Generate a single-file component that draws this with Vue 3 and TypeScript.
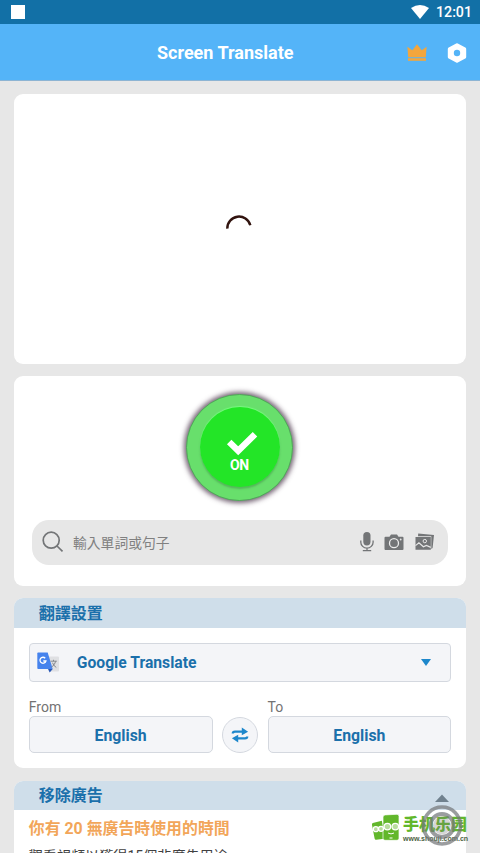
<script setup lang="ts">
import { ref } from 'vue'

const from = ref('English')
const to = ref('English')
const enabled = ref(true)

function swap(): void {
  const previous = from.value
  from.value = to.value
  to.value = previous
}
</script>

<template>
  <main class="screen">
    <div class="status">
      <span class="notice"></span>
      <div class="status-right">
        <svg width="18" height="14" viewBox="0 0 18 14"><path d="M0 3Q9-3 18 3L9 14Z" fill="#fff" /></svg>
        <span class="clock">12:01</span>
      </div>
    </div>
    <header class="bar">
      <h1>Screen Translate</h1>
      <div class="bar-icons">
        <svg width="20" height="18" viewBox="0 0 20 18" fill="#f3a63c">
          <path d="M.4 2.8 5.3 6.3 10 .2 14.7 6.3l4.9-3.5-.8 10.4H1.2Z" />
          <path d="M1 14.2h18v2.6H1Z" />
        </svg>
        <svg width="20" height="20" viewBox="0 0 20 20">
          <path d="M10 2 17.5 6v8L10 18 2.5 14V6Z" fill="#fff" stroke="#fff" stroke-width="3.4" stroke-linejoin="round" />
          <circle cx="10" cy="10" r="3.2" fill="#54b4f8" />
        </svg>
      </div>
    </header>

    <section class="card loading">
      <svg width="28" height="28" viewBox="0 0 28 28"><path d="M2.3 14.6A11.7 11.7 0 0 1 25.3 11.3" fill="none" stroke="#32140f" stroke-width="2.5" /></svg>
    </section>

    <section class="card control">
      <button class="power" @click="enabled = !enabled">
        <span class="power-core">
          <svg width="32" height="26" viewBox="0 0 32 26"><path d="m3.2 12 9 8.7L29 4.2" fill="none" stroke="#fff" stroke-width="6.4" /></svg>
          <span class="power-label">{{ enabled ? 'ON' : 'OFF' }}</span>
        </span>
      </button>
      <div class="search">
        <svg class="lens" width="22" height="22" viewBox="0 0 22 22" fill="none" stroke="#737577" stroke-width="1.7"><circle cx="9.2" cy="9.2" r="8" /><path d="m15 15 5.5 5.3" /></svg>
        <span class="hint">輸入單詞或句子</span>
        <svg class="mic" width="14" height="20" viewBox="0 0 14 20">
          <rect x="3.3" y="0" width="7.2" height="13.4" rx="3.6" fill="#737577" />
          <path d="M.8 8.6v1.6a6.1 5.9 0 0 0 12.3 0V8.6M7 16.2v2.3M2.8 18.7h8.4" fill="none" stroke="#737577" stroke-width="1.3" />
        </svg>
        <svg class="camera" width="20" height="17" viewBox="0 0 20 17">
          <path d="M1.5 2.8h4L7 .5h6l1.5 2.3h4q1 0 1 1v11.3q0 1-1 1h-17q-1 0-1-1V3.8q0-1 1-1Z" fill="#737577" />
          <circle cx="10" cy="9.2" r="4.5" fill="none" stroke="#ececec" stroke-width="1.3" />
          <circle cx="16.7" cy="5.5" r=".9" fill="#e7e7e7" />
        </svg>
        <svg class="gallery" width="20" height="18" viewBox="0 0 20 18">
          <path d="M3.2.4 19 2l-1.4 13-1.3 1V3.2H3Z" fill="#737577" />
          <path d="M.5 4.1h15.3v12.6H.5Z" fill="#737577" />
          <path d="m.5 12.6 3.4-2.8 4.5 4 3-1.4 4.4 2" fill="none" stroke="#e7e7e7" stroke-width="1.2" />
          <circle cx="9.8" cy="8.1" r="1.7" fill="none" stroke="#e7e7e7" />
        </svg>
      </div>
    </section>

    <section class="card settings">
      <h2>翻譯設置</h2>
      <div class="settings-body">
        <div class="select">
          <svg class="translate" width="23" height="21" viewBox="0 0 23 21">
            <path d="M8 4.5h13q1 0 1 1v13q0 1-1 1h-8Z" fill="#dfe0e3" />
            <path d="M1.2.5h9.5l5 16.5H1.2Q.3 17 .3 16V1.5q0-1 .9-1Z" fill="#4683ed" />
            <path d="M11 17h4.7l-3 3.5Z" fill="#2857b5" />
            <path d="M8.2 6.2A3 3 0 1 0 8.9 9H6.3" fill="none" stroke="#fff" stroke-width="1.3" />
            <path d="M13.6 9.2h6.2M16.5 7.8v1.4m2.2 0q-.6 3.5-4.2 6m1-4.5q1 3 3.8 4.8" fill="none" stroke="#85888d" stroke-width="1" />
          </svg>
          <span>Google Translate</span>
          <svg class="arrow" width="10" height="7" viewBox="0 0 10 7"><path d="M0 0h10L5 7Z" fill="#1d87cb" /></svg>
        </div>
        <div class="languages">
          <div class="language"><label>From</label><button class="choice">{{ from }}</button></div>
          <button class="swap" @click="swap">
            <svg width="18" height="16" viewBox="0 0 18 16">
              <path d="M1.8 6.6Q1.8 4.7 4 4.7h8M16.2 9.4q0 1.9-2.2 1.9H6" fill="none" stroke="#1d87cb" stroke-width="2.3" />
              <path d="m10.8.4 6.3 4.3-6.3 3.5ZM7.2 7.8.9 11.3l6.3 4.3Z" fill="#1d87cb" />
            </svg>
          </button>
          <div class="language"><label>To</label><button class="choice">{{ to }}</button></div>
        </div>
      </div>
    </section>

    <section class="card ads">
      <h2>移除廣告</h2>
      <p class="remaining">你有 20 無廣告時使用的時間</p>
      <p class="details">觀看視頻以獲得15個非廣告用途:</p>
    </section>

    <div class="watermark">
      <svg class="phones" width="28" height="27" viewBox="0 0 28 27">
        <path d="m.8 9 9-2.2L14 24.5l-9.8 1.2Q3 26 2.6 24.5L0 11Q-.2 9.4.8 9Z" fill="#62b72b" />
        <path d="M13.2.9 25 .3q2 0 2 2v22q0 2-2 2H13q-2 0-2-2V3q0-2 2.2-2.1Z" fill="#62b72b" stroke="#fff" stroke-width=".7" />
        <g fill="#b9dd9e" stroke="#fff" stroke-width="1.3"><circle cx="3.8" cy="15.2" r="2.5" /><circle cx="9" cy="14.8" r="2.5" /><circle cx="15.4" cy="12.6" r="3.3" /><circle cx="23.3" cy="12.6" r="3.3" /></g>
        <path d="M16 19q3 1.8 6 0m-4.5 5h3" stroke="#fff" fill="none" />
      </svg>
      <div class="brand"><strong>手机乐园</strong><small>www.shouji.com.cn</small></div>
    </div>
    <svg class="floating" width="44" height="60" viewBox="0 0 44 60">
      <path d="m15 9 7-7.5L29 9Z" fill="#70818e" />
      <g fill="none" stroke="#74777a" stroke-opacity=".72"><circle cx="22" cy="32.5" r="18.5" stroke-width="3.6" /><circle cx="22" cy="32.5" r="11.5" stroke-width="4" /></g>
      <circle cx="22" cy="32.5" r="9" fill="#777" fill-opacity=".3" />
    </svg>
  </main>
</template>

<style>
body { margin: 0; overflow: hidden; }
</style>

<style scoped>
.screen {
  position: relative;
  box-sizing: border-box;
  width: 480px;
  height: 853px;
  overflow: hidden;
  background: #e7e7e7;
  font-family: Roboto, "Noto Sans CJK TC", sans-serif;
}
svg { display: block; flex: none; }
button { box-sizing: border-box; margin: 0; padding: 0; font-family: inherit; }
h1, h2, p { margin: 0; }
.status { display: flex; align-items: center; justify-content: space-between; height: 24px; padding: 0 8px 0 11px; background: #1270a6; }
.notice { width: 14px; height: 14px; background: #fff; }
.status-right { display: flex; align-items: center; gap: 7px; color: #fff; }
.clock { font-size: 14.2px; line-height: 24px; font-weight: 500; }
.bar { display: flex; align-items: center; justify-content: space-between; box-sizing: border-box; height: 57px; padding: 1px 13px 0 157px; border-bottom: 1px solid #8db4d3; background: #54b4f8; }
.bar h1 { padding-top: 1px; color: #fff; font-size: 18px; line-height: 24px; font-weight: 700; white-space: nowrap; }
.bar-icons { display: flex; align-items: center; gap: 20px; }
.card { width: 452.5px; margin: 0 auto; border-radius: 9px; background: #fff; overflow: hidden; }
.loading { display: flex; align-items: center; justify-content: center; box-sizing: border-box; height: 270px; margin-top: 12.5px; padding: 0 1.5px 2px 0; }
.control { display: flex; flex-direction: column; align-items: center; box-sizing: border-box; height: 209.5px; margin-top: 12.5px; padding-top: 18px; }
.power { display: flex; align-items: center; justify-content: center; width: 107px; height: 107px; margin-right: 1px; padding-bottom: 1px; border: 1px solid #51a65a; border-radius: 50%; background: #68df6c; box-shadow: 0 0 5px 2px rgba(48, 24, 48, .68); }
.power-core { display: flex; flex-direction: column; align-items: center; box-sizing: border-box; width: 80px; height: 80px; padding: 22.5px 0 0; border-radius: 50%; background: #23e527; box-shadow: 0 -1px 1px #78fa80, 0 2px 2px #54b65a; }
.power-core svg { margin-left: 4px; }
.power-label { margin-top: 1.5px; color: #fff; font-size: 14px; line-height: 17px; font-weight: 700; letter-spacing: -.2px; }
.search { display: flex; align-items: center; box-sizing: border-box; width: 416px; height: 44.5px; margin-top: 19px; padding: 0 13px 0 10px; border-radius: 17px; background: #e7e7e7; }
.hint { margin: 1px auto 0 9px; color: #808080; font-size: 13.8px; line-height: 22px; }
.mic { margin-right: 10px; }
.gallery { margin-left: 11px; }
.settings { height: 170px; margin-top: 12.5px; }
h2 { box-sizing: border-box; height: 29.5px; padding: 1.5px 0 0 25px; background: #cfdeea; color: #1b70ab; font-size: 16px; line-height: 28px; font-weight: 700; }
.settings-body { padding: 15px 15px 0; }
.select { display: flex; align-items: center; box-sizing: border-box; height: 39.5px; padding: 0 19px 0 7px; border: 1px solid #d4d8df; border-radius: 4px; background: #f4f5f8; color: #1b70ab; font-size: 15.7px; font-weight: 700; }
.select span { margin: 1px auto 0 17px; }
.languages { display: grid; grid-template-columns: 1fr 36px 1fr; gap: 9.5px; align-items: end; margin-top: 15.5px; }
.language { display: flex; flex-direction: column; }
.language label { height: 18px; color: #737373; font-size: 14px; line-height: 19px; }
.choice { height: 37.5px; padding-top: 1.5px; border: 1px solid #d4d8df; border-radius: 5px; background: #f4f5f8; color: #1b70ab; font-size: 15.8px; font-weight: 700; }
.swap { display: flex; align-items: center; justify-content: center; width: 36px; height: 36px; margin-bottom: .5px; border: 1px solid #d4d8df; border-radius: 50%; background: #f4f5f8; }
.ads { height: 90px; margin-top: 12.5px; }
.remaining { margin: 7px 15px 0; color: #f2a65a; font-size: 15.9px; line-height: 24px; font-weight: 700; white-space: nowrap; }
.details { margin: 5px 15px 0; color: #414141; font-size: 14.1px; line-height: 20px; white-space: nowrap; }
.watermark { position: absolute; left: 372px; top: 814px; display: flex; gap: 3px; }
.brand { display: flex; flex-direction: column; color: #62b72b; font-family: "Noto Sans CJK SC", sans-serif; }
.brand strong { height: 20px; font-size: 16px; line-height: 18px; font-weight: 900; }
.brand small { color: #4c5f42; font-family: "Liberation Sans", sans-serif; font-size: 7px; line-height: 9px; font-weight: 700; }
.floating { position: absolute; left: 420px; top: 793px; }
</style>
